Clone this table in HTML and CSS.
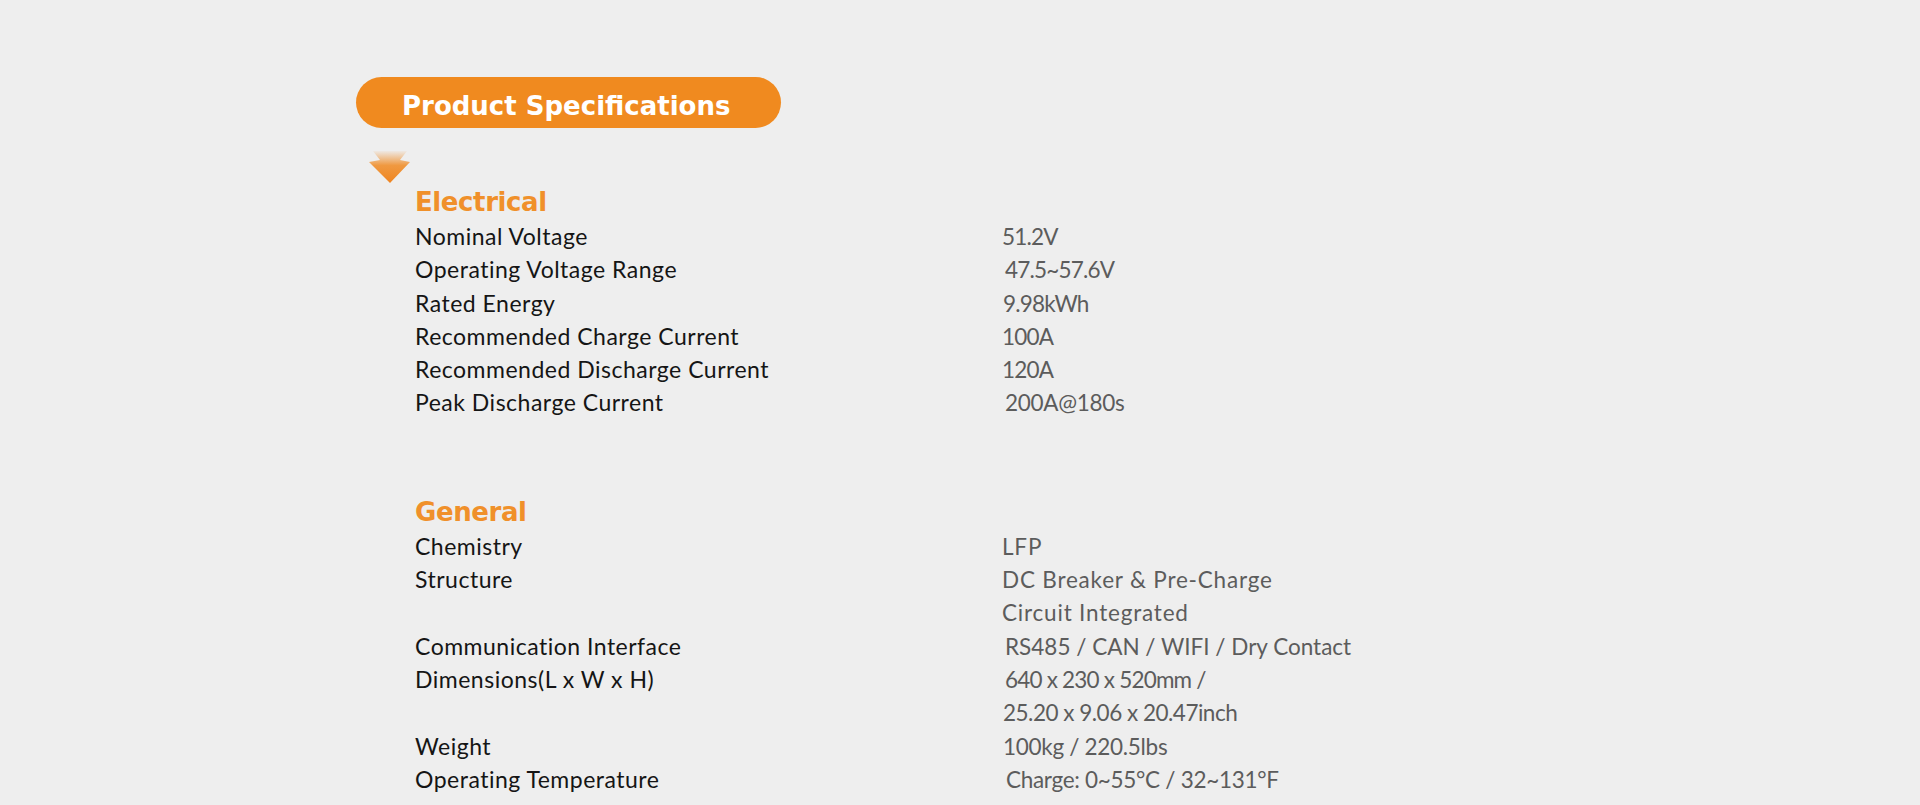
FILE: index.html
```html
<!DOCTYPE html>
<html lang="en">
<head>
<meta charset="utf-8">
<title>Product Specifications</title>
<link rel="stylesheet" href="styles.css">
</head>
<body>
<main class="page">
  <div class="pill">Product Specifications</div>
  <svg class="arrow" width="42" height="33" viewBox="0 0 42 33" aria-hidden="true">
    <defs>
      <linearGradient id="ag" x1="0" y1="0" x2="0" y2="1">
        <stop offset="0" stop-color="#f08a22" stop-opacity="0.05"/>
        <stop offset="0.45" stop-color="#f08a22" stop-opacity="0.85"/>
        <stop offset="1" stop-color="#ef8420" stop-opacity="1"/>
      </linearGradient>
    </defs>
    <polygon points="4,0 38,0 31,9 41,11 21,32 0,11 11,9" fill="url(#ag)"/>
  </svg>

  <section class="section">
    <h2 class="heading">Electrical</h2>
    <div class="specs">
      <div class="label">Nominal Voltage</div><div class="value">51.2V</div>
      <div class="label">Operating Voltage Range</div><div class="value indent">47.5~57.6V</div>
      <div class="label">Rated Energy</div><div class="value nudge">9.98kWh</div>
      <div class="label">Recommended Charge Current</div><div class="value">100A</div>
      <div class="label">Recommended Discharge Current</div><div class="value">120A</div>
      <div class="label">Peak Discharge Current</div><div class="value indent loose">200A@180s</div>
    </div>
  </section>

  <section class="section general">
    <h2 class="heading">General</h2>
    <div class="specs">
      <div class="label">Chemistry</div><div class="value wide">LFP</div>
      <div class="label">Structure</div><div class="value wide">DC Breaker &amp; Pre-Charge<br>Circuit Integrated</div>
      <div class="label">Communication Interface</div><div class="value indent plain">RS485 / CAN / WIFI / Dry Contact</div>
      <div class="label">Dimensions(L x W x H)</div><div class="value indent"><span class="dim-mm">640 x 230 x 520mm /</span><br><span class="back">25.20 x 9.06 x 20.47inch</span></div>
      <div class="label">Weight</div><div class="value nudge mid">100kg / 220.5lbs</div>
      <div class="label">Operating Temperature</div><div class="value indent4 loose">Charge: 0~55°C / 32~131°F</div>
    </div>
  </section>
</main>
</body>
</html>
```

FILE: styles.css
```css
html, body {
  margin: 0;
  padding: 0;
  background: #eeeeee;
}

.page {
  font-family: "Lato", "Liberation Sans", sans-serif;
  padding: 77px 0 40px 356px;
  display: flex;
  flex-direction: column;
  align-items: flex-start;
}

.pill {
  box-sizing: border-box;
  width: 425px;
  height: 51px;
  border-radius: 26px;
  background: #f08a1f;
  color: #ffffff;
  font-family: "DejaVu Sans", "Lato", sans-serif;
  font-weight: 700;
  font-size: 26px;
  line-height: 34px;
  padding: 12px 0 0 46px;
  white-space: nowrap;
}

.arrow {
  display: block;
  margin: 23px 0 0 13px;
}

.section {
  padding-left: 59px;
  margin-top: 3px;
}

.section.general {
  margin-top: 77px;
}

.heading {
  margin: 0 0 3px 0;
  font-family: "DejaVu Sans", "Lato", sans-serif;
  font-size: 26px;
  line-height: 30px;
  font-weight: 700;
  letter-spacing: -0.4px;
  color: #f0902a;
}

.specs {
  display: grid;
  grid-template-columns: 587px auto;
  font-size: 22.5px;
  line-height: 33.3px;
}

.label {
  color: #151515;
  font-size: 23px;
  letter-spacing: 0.5px;
}

.value {
  color: #5c5c5c;
  letter-spacing: -0.8px;
}

.value.wide {
  letter-spacing: 0.8px;
}

.value.mid {
  letter-spacing: -0.3px;
}

.value.loose {
  letter-spacing: -0.3px;
}

.value.plain {
  letter-spacing: 0;
}

.value.indent {
  padding-left: 3px;
}

.value.indent4 {
  padding-left: 4px;
}

.value.nudge {
  padding-left: 1px;
}

.dim-mm {
  letter-spacing: -0.8px;
}

.back {
  margin-left: -2px;
  letter-spacing: -0.5px;
}
```
